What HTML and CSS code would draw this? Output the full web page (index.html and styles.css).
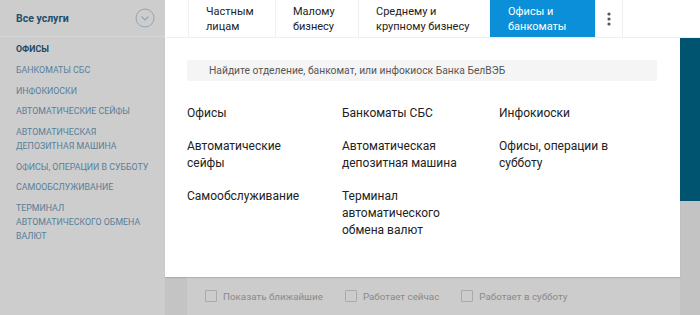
FILE: index.html
```html
<!DOCTYPE html>
<html lang="ru">
<head>
    <meta charset="UTF-8">
    <title>Офисы и банкоматы</title>
    <meta name="viewport" content="width=device-width, initial-scale=1">
    <link rel="stylesheet" href="styles.css">
</head>
<body>
    <div class="page">
        <aside class="sidebar">
            <div class="sidebar-head">
                <span>Все услуги</span>
                <svg class="toggle" width="20" height="20" viewBox="0 0 20 20">
                    <circle cx="10" cy="10" r="9" fill="none" stroke="#8ea7b7" stroke-width="1"/>
                    <path d="M6.5 8.5 L10 12 L13.5 8.5" fill="none" stroke="#8ea7b7" stroke-width="1.2"/>
                </svg>
            </div>
            <ul class="side-list">
                <li class="current">Офисы</li>
                <li>Банкоматы СБС</li>
                <li>Инфокиоски</li>
                <li>Автоматические сейфы</li>
                <li>Автоматическая<br>депозитная машина</li>
                <li>Офисы, операции в субботу</li>
                <li>Самообслуживание</li>
                <li>Терминал<br>автоматического обмена<br>валют</li>
            </ul>
        </aside>

        <div class="main">
            <nav class="topnav">
                <a class="tab" href="#">Частным<br>лицам</a>
                <a class="tab" href="#">Малому<br>бизнесу</a>
                <a class="tab" href="#">Среднему и<br>крупному бизнесу</a>
                <a class="tab active" href="#">Офисы и<br>банкоматы</a>
                <a class="tab more" href="#">
                    <svg width="6" height="16" viewBox="0 0 6 16">
                        <circle cx="3" cy="3" r="1.6" fill="#555"/>
                        <circle cx="3" cy="8" r="1.6" fill="#555"/>
                        <circle cx="3" cy="13" r="1.6" fill="#555"/>
                    </svg>
                </a>
            </nav>

            <div class="content">
                <div class="panel">
                    <div class="filters">
                        <label class="check"><span class="box"></span>Показать ближайшие</label>
                        <label class="check"><span class="box"></span>Работает сейчас</label>
                        <label class="check"><span class="box"></span>Работает в субботу</label>
                    </div>
                </div>
                <div class="aside">
                    <div class="aside-top"></div>
                </div>

                <div class="dropdown">
                    <div class="search">Найдите отделение, банкомат, или инфокиоск Банка БелВЭБ</div>
                    <div class="links">
                        <a href="#">Офисы</a>
                        <a href="#">Банкоматы СБС</a>
                        <a href="#">Инфокиоски</a>
                        <a href="#">Автоматические<br>сейфы</a>
                        <a href="#">Автоматическая<br>депозитная машина</a>
                        <a href="#">Офисы, операции в<br>субботу</a>
                        <a href="#">Самообслуживание</a>
                        <a href="#">Терминал<br>автоматического<br>обмена валют</a>
                    </div>
                </div>
            </div>
        </div>
    </div>
</body>
</html>
```

FILE: styles.css
```css
body {
    margin: 0;
    font-family: Roboto, "Liberation Sans", sans-serif;
    background: #c4c4c4;
}
.page {
    display: flex;
    width: 700px;
    height: 315px;
    overflow: hidden;
}

/* sidebar */
.sidebar {
    width: 165px;
    flex-shrink: 0;
    background: #cdcdcd;
}
.sidebar-head {
    height: 36px;
    display: flex;
    align-items: center;
    justify-content: space-between;
    padding: 0 10px 0 16px;
    border-bottom: 1px solid #d6d6d6;
    font-size: 10.5px;
    font-weight: bold;
    color: #234f6b;
}
.side-list {
    list-style: none;
    margin: 0;
    padding: 2px 0 0 16px;
}
.side-list li {
    font-size: 8.8px;
    line-height: 14px;
    text-transform: uppercase;
    color: #57809a;
    padding: 3.3px 0 3.4px;
}
.side-list li.current {
    font-weight: bold;
    color: #1c4a68;
}

/* top navigation */
.main {
    flex: 1;
    display: flex;
    flex-direction: column;
}
.topnav {
    height: 38px;
    display: flex;
    background: #fff;
    padding-left: 23px;
    border-bottom: 1px solid #f0f0f0;
    box-sizing: border-box;
}
.tab {
    display: flex;
    align-items: center;
    padding: 0 17px;
    font-size: 11px;
    line-height: 15px;
    color: #222;
    text-decoration: none;
    white-space: nowrap;
    border-left: 1px solid #f0f0f0;
}
.tab:nth-child(1) { width: 52px; }
.tab:nth-child(2) { width: 48px; }
.tab:nth-child(3) { width: 97px; }
.tab.active {
    width: 70px;
    background: #0b8fd9;
    color: #fff;
    border-left: none;
    padding-left: 18px;
}
.tab.more {
    width: 26px;
    padding: 0;
    justify-content: center;
    border-right: 1px solid #f0f0f0;
}

/* dimmed content under the dropdown */
.content {
    flex: 1;
    display: flex;
    position: relative;
}
.panel {
    flex: 1;
    margin-left: 22px;
    background: #cccccc;
    display: flex;
    align-items: flex-end;
}
.aside {
    width: 20px;
    background: #c3c3c3;
}
.aside-top {
    height: 163px;
    background: #005470;
}
.filters {
    display: flex;
    gap: 22px;
    padding: 0 0 13px 18px;
}
.check {
    display: flex;
    align-items: center;
    gap: 6px;
    font-size: 9.8px;
    color: #8a8a8a;
}
.box {
    width: 10px;
    height: 10px;
    border: 1px solid #ababab;
    border-radius: 1px;
}

/* dropdown */
.dropdown {
    position: absolute;
    left: 0;
    top: 0;
    width: 515px;
    height: 239px;
    background: #fff;
    box-shadow: 0 1px 1px rgba(0, 0, 0, 0.12);
    padding: 22px 23px 0 22px;
    box-sizing: border-box;
}
.search {
    background: #f5f5f5;
    height: 21px;
    line-height: 21px;
    padding-left: 22px;
    font-size: 10.3px;
    color: #555;
}
.links {
    display: grid;
    grid-template-columns: 155px 157px 1fr;
    row-gap: 16px;
    padding-top: 24px;
}
.links a {
    font-size: 12px;
    line-height: 17px;
    color: #222;
    text-decoration: none;
}
```
